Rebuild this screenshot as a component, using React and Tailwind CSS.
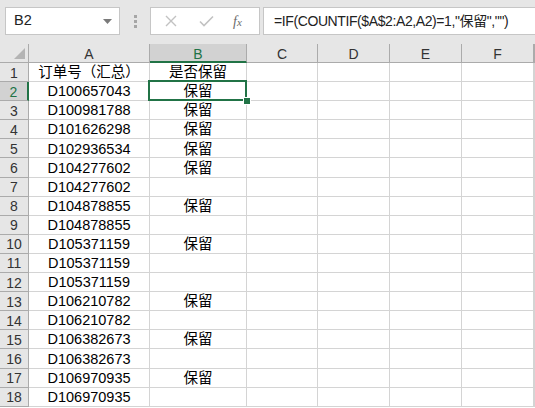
import React from "react";

const FONT = { fontFamily: '"Liberation Sans","Noto Sans CJK SC",sans-serif' };

const rows = [
  ["订单号（汇总）", "是否保留"],
  ["D100657043", "保留"],
  ["D100981788", "保留"],
  ["D101626298", "保留"],
  ["D102936534", "保留"],
  ["D104277602", "保留"],
  ["D104277602", ""],
  ["D104878855", "保留"],
  ["D104878855", ""],
  ["D105371159", "保留"],
  ["D105371159", ""],
  ["D105371159", ""],
  ["D106210782", "保留"],
  ["D106210782", ""],
  ["D106382673", "保留"],
  ["D106382673", ""],
  ["D106970935", "保留"],
  ["D106970935", ""],
];

const cols = "grid-cols-[29px_121px_97px_71px_72px_72px_72px_1fr]";

export default function App() {
  return (
    <div className="w-[535px] h-[408px] overflow-hidden bg-white text-black" style={FONT}>
      {/* formula bar */}
      <div className="h-[44px] bg-[#e6e6e6] flex items-start pt-[7px]">
        <div className="ml-[5px] w-[115px] h-[28px] bg-white border border-[#c6c6c6] flex items-center justify-between pl-[8px] pr-[7px]">
          <span className="text-[14.5px] text-[#222]">B2</span>
          <svg width="9" height="5" viewBox="0 0 9 5"><path d="M0 0H9L4.5 5Z" fill="#7a7a7a" /></svg>
        </div>
        <div className="w-[30px] h-[28px] flex flex-col items-center justify-center gap-[2px]">
          <div className="w-[3px] h-[3px] bg-[#a6a6a6]" />
          <div className="w-[3px] h-[3px] bg-[#a6a6a6]" />
          <div className="w-[3px] h-[3px] bg-[#a6a6a6]" />
        </div>
        <div className="w-[110px] h-[28px] bg-white border border-[#c6c6c6] flex items-center">
          <svg className="ml-[14px]" width="12" height="12" viewBox="0 0 12 12"><path d="M1 1L11 11M11 1L1 11" stroke="#c2c2c2" strokeWidth="1.4" /></svg>
          <svg className="ml-[22px]" width="15" height="12" viewBox="0 0 15 12"><path d="M1 6.5L5 10.5L14 1.5" stroke="#c2c2c2" strokeWidth="1.6" fill="none" /></svg>
          <span className="ml-[19px] text-[14px] italic text-[#6b6b6b]" style={{ fontFamily: '"Liberation Serif",serif' }}>f<span className="text-[11px]">x</span></span>
        </div>
        <div className="ml-[3px] flex-1 h-[28px] bg-white border border-r-0 border-[#c6c6c6] flex items-center pl-[10px]">
          <span className="text-[14px] tracking-[-0.4px] text-[#222] whitespace-nowrap">=IF(COUNTIF($A$2:A2,A2)=1,"保留","")</span>
        </div>
      </div>

      {/* sheet */}
      <div className={`grid ${cols}`}>
        {/* header row */}
        <div className="h-[19px] bg-[#e6e6e6] border-r border-b border-[#ababab] relative">
          <svg className="absolute right-[3px] bottom-[3px]" width="11" height="11" viewBox="0 0 11 11"><path d="M11 0V11H0Z" fill="#b4b4b4" /></svg>
        </div>
        {["A", "B", "C", "D", "E", "F", ""].map((c, i) => (
          <div
            key={i}
            className={
              c === "B"
                ? "h-[19px] pt-[3px] bg-[#d2d2d2] border-r border-[#ababab] border-b-2 border-b-[#217346] flex items-center justify-center text-[14px] text-[#217346]"
                : "h-[19px] pt-[2px] bg-[#e6e6e6] border-r border-b border-[#ababab] flex items-center justify-center text-[14px] text-[#333]"
            }
          >
            {c}
          </div>
        ))}

        {rows.map((r, idx) => {
          const n = idx + 1;
          const sel = n === 2;
          return (
            <React.Fragment key={n}>
              <div
                className={
                  sel
                    ? "h-[19.1px] pt-[2px] bg-[#d2d2d2] border-r-2 border-r-[#217346] border-b border-[#ababab] flex items-center justify-center text-[14px] text-[#217346]"
                    : "h-[19.1px] pt-[2px] bg-[#e6e6e6] border-r border-b border-[#ababab] flex items-center justify-center text-[14px] text-[#333]"
                }
              >
                {n}
              </div>
              <div className="h-[19.1px] pt-[2px] border-r border-b border-[#d4d4d4] flex items-center justify-center text-[14.5px] whitespace-nowrap">
                {r[0]}
              </div>
              <div className="h-[19.1px] pt-[2px] border-r border-b border-[#d4d4d4] flex items-center justify-center text-[14.5px] relative">
                {sel && (
                  <>
                    <div className="absolute left-[-2px] top-[-2px] right-[-1px] bottom-[-1px] border-2 border-[#217346]" />
                    <div className="absolute right-[-5px] bottom-[-5px] w-[8px] h-[8px] bg-[#217346] border border-white z-10" />
                  </>
                )}
                {r[1]}
              </div>
              {[0, 1, 2, 3, 4].map((k) => (
                <div key={k} className="h-[19.1px] border-r border-b border-[#d4d4d4]" />
              ))}
            </React.Fragment>
          );
        })}
      </div>
    </div>
  );
}
